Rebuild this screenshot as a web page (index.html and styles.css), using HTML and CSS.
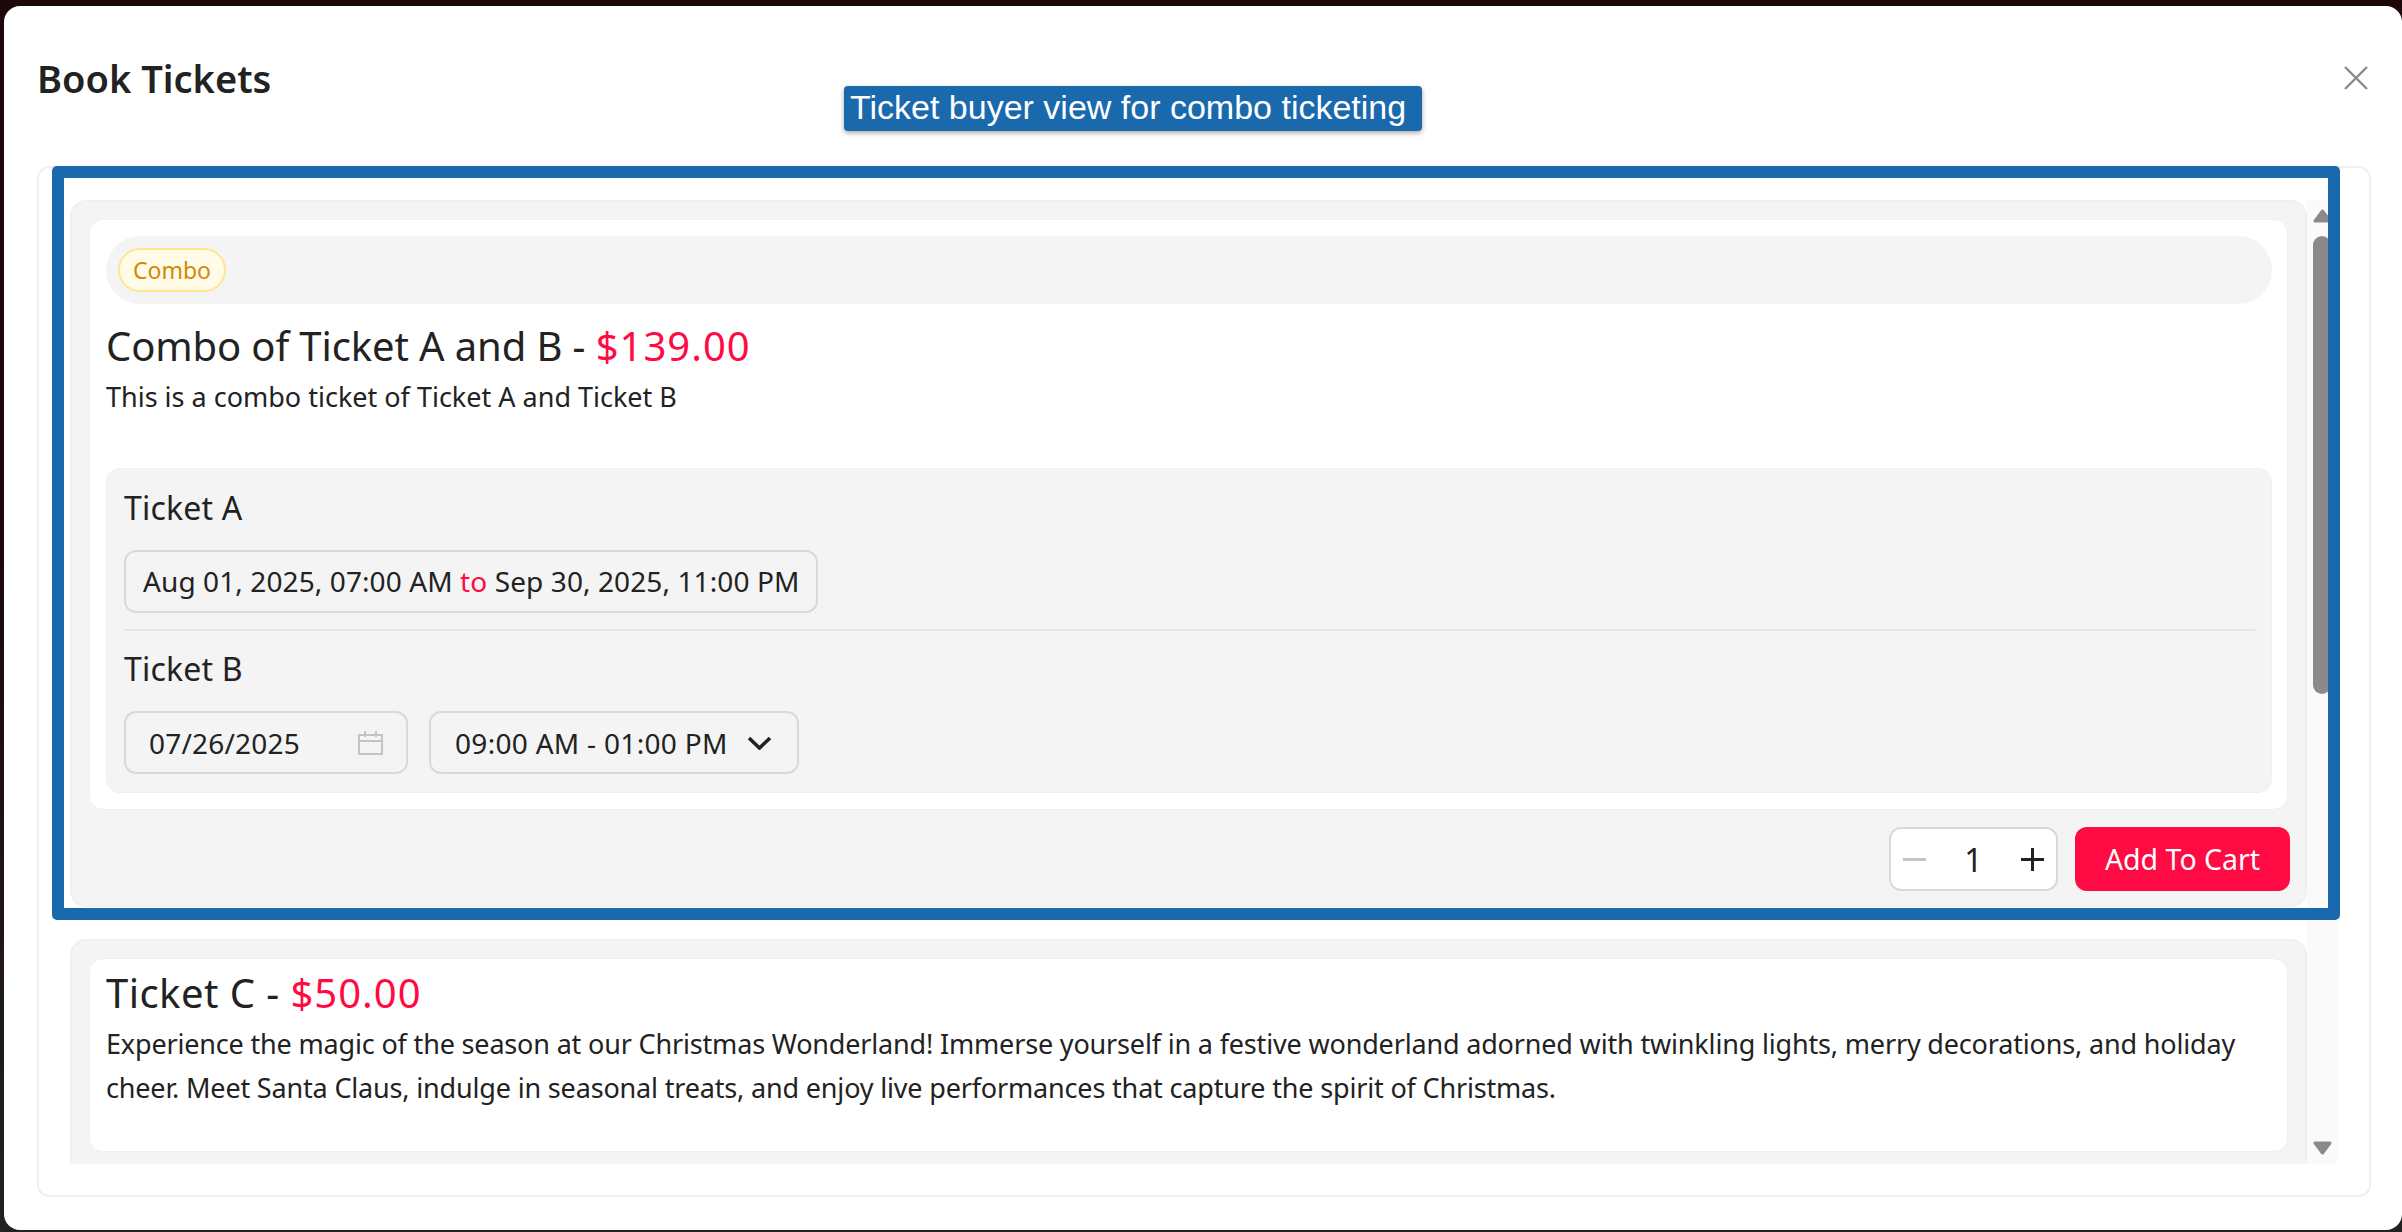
FILE: index.html
```html
<!DOCTYPE html>
<html lang="en">
<head>
  <meta charset="UTF-8">
  <meta name="viewport" content="width=device-width, initial-scale=1.0">
  <title>Book Tickets</title>
  <link rel="stylesheet" href="styles.css">
</head>
<body>
  <div class="modal">
    <div class="modal-header">
      <h2 class="modal-title">Book Tickets</h2>
      <svg class="close-icon" width="24" height="24" viewBox="0 0 24 24">
        <path d="M1 1L23 23M23 1L1 23"/>
      </svg>
    </div>

    <div class="panel">
      <div class="scroll-area">
        <div class="ticket-list">

          <div class="ticket">
            <div class="ticket-body">
              <div class="tag-row"><span class="tag">Combo</span></div>
              <div class="ticket-name">Combo of Ticket A and B - <span class="price">$139.00</span></div>
              <p class="ticket-desc">This is a combo ticket of Ticket A and Ticket B</p>

              <div class="combo-items">
                <div class="combo-name">Ticket A</div>
                <div class="field-row">
                  <div class="field field-range">Aug 01, 2025, 07:00 AM <span class="to">to</span> Sep 30, 2025, 11:00 PM</div>
                </div>
                <div class="combo-divider"></div>
                <div class="combo-name">Ticket B</div>
                <div class="field-row">
                  <div class="field field-date">
                    <span>07/26/2025</span>
                    <svg class="calendar-icon" width="25" height="24" viewBox="0 0 25 24">
                      <path d="M1 4H24V23H1ZM1 10H24M7 0V6M18 0V6"/>
                    </svg>
                  </div>
                  <div class="field field-select">
                    <span>09:00 AM - 01:00 PM</span>
                    <svg class="chevron-icon" width="25" height="14" viewBox="0 0 25 14">
                      <path d="M2 2L12.5 12L23 2"/>
                    </svg>
                  </div>
                </div>
              </div>
            </div>

            <div class="ticket-footer">
              <div class="stepper">
                <span class="step-minus"></span>
                <span class="step-value">1</span>
                <span class="step-plus"></span>
              </div>
              <button class="add-btn">Add To Cart</button>
            </div>
          </div>

          <div class="ticket ticket-cut">
            <div class="ticket-body ticket-body-plain">
              <div class="ticket-name">Ticket C - <span class="price">$50.00</span></div>
              <p class="ticket-desc ticket-desc-long">Experience the magic of the season at our Christmas Wonderland! Immerse yourself in a festive wonderland adorned with twinkling lights, merry decorations, and holiday cheer. Meet Santa Claus, indulge in seasonal treats, and enjoy live performances that capture the spirit of Christmas.</p>
            </div>
          </div>

        </div>

        <div class="scrollbar">
          <svg class="arrow" width="19" height="14" viewBox="0 0 19 14"><path d="M9.5 2L17 12H2Z"/></svg>
          <span class="thumb"></span>
          <svg class="arrow arrow-down" width="19" height="14" viewBox="0 0 19 14"><path d="M2 2H17L9.5 12Z"/></svg>
        </div>
      </div>
    </div>

    <!-- annotation drawn on top of the screenshot -->
    <div class="note-label">Ticket buyer view for combo ticketing</div>
    <div class="note-frame"></div>
  </div>
</body>
</html>
```

FILE: styles.css
```css
* {
  box-sizing: border-box;
}
html, body {
  height: 100%;
}
body {
  margin: 0;
  padding: 6px 0 2px 4px;
  overflow: hidden;
  font-family: "Noto Sans", Lato, sans-serif;
  color: #222;
  background: linear-gradient(180deg, #1c0709 0%, #1c0709 45%, #222 100%);
}
.modal {
  position: relative;
  height: 1224px;
  background: white;
  border-radius: 16px;
  overflow: hidden;
}
.modal-header {
  display: flex;
  justify-content: space-between;
  align-items: center;
  height: 160px;
  padding: 0 34px 16px 33px;
}
.modal-title {
  margin: 0;
  font-size: 38px;
  line-height: 50px;
  font-weight: 600;
}
.close-icon path {
  fill: none;
  stroke: #8a8a8a;
  stroke-width: 2.4;
}
.panel {
  width: 2334px;
  height: 1031px;
  margin-left: 33px;
  padding: 32px 32px 31px 31px;
  border: 2px solid #f0f0f0;
  border-radius: 12px;
}
.scroll-area {
  display: flex;
  height: 964px;
  overflow: hidden;
}
.ticket-list {
  flex: 1;
  display: flex;
  flex-direction: column;
  gap: 32px;
}
.ticket {
  padding: 17px 17px 14px;
  background: #f4f4f4;
  border: 2px solid #f0f0f0;
  border-radius: 16px;
}
.ticket-cut {
  padding-bottom: 60px;
}
.ticket-body {
  padding: 16px 15px 16px 16px;
  background: white;
  border: 1px solid #f0f0f0;
  border-radius: 14px;
}
.ticket-body-plain {
  padding: 9px 15px 41px 16px;
}
.tag-row {
  display: flex;
  align-items: center;
  height: 68px;
  padding-left: 12px;
  background: #f4f4f4;
  border-radius: 34px;
}
.tag {
  padding: 0 13px;
  font-size: 23px;
  line-height: 40px;
  color: #d48806;
  background: #fffbe6;
  border: 2px solid #ffe58f;
  border-radius: 22px;
}
.ticket-name {
  margin-top: 17px;
  font-size: 40px;
  line-height: 50px;
  letter-spacing: -0.12px;
}
.ticket-body-plain .ticket-name {
  margin-top: 0;
  letter-spacing: 0.45px;
}
.ticket-name .price {
  letter-spacing: 1px;
}
.price, .to {
  color: #ff0a43;
}
.ticket-desc {
  margin: 4px 0 0;
  font-size: 27px;
  line-height: 44px;
}
.ticket-desc-long {
  letter-spacing: -0.17px;
}
.combo-items {
  margin-top: 49px;
  padding: 19px 16px 18px 17px;
  background: #f4f4f4;
  border: 1px solid #f0f0f0;
  border-radius: 14px;
}
.combo-name {
  font-size: 32px;
  line-height: 40px;
  letter-spacing: 0.2px;
}
.field-row {
  display: flex;
  gap: 21px;
  margin-top: 22px;
}
.field {
  display: flex;
  align-items: center;
  height: 63px;
  font-size: 28px;
  letter-spacing: 0.2px;
  border: 2px solid #d9d9d9;
  border-radius: 12px;
}
.field-range {
  display: block;
  width: 694px;
  padding: 0 17px;
  line-height: 59px;
  letter-spacing: 0.1px;
  white-space: pre;
}
.field-date {
  justify-content: space-between;
  width: 284px;
  padding: 0 23px;
}
.field-select {
  justify-content: space-between;
  width: 370px;
  padding: 0 25px 0 24px;
  letter-spacing: 0.3px;
}
.calendar-icon path {
  fill: none;
  stroke: #c4c4c4;
  stroke-width: 2;
}
.chevron-icon path {
  fill: none;
  stroke: #222;
  stroke-width: 3.6;
}
.combo-divider {
  height: 2px;
  margin-top: 16px;
  margin-bottom: 18px;
  background: #e6e6e6;
}
.ticket-footer {
  display: flex;
  justify-content: flex-end;
  gap: 17px;
  margin: 17px -2px 0 0;
}
.stepper {
  display: flex;
  align-items: center;
  justify-content: space-between;
  width: 169px;
  height: 64px;
  padding: 0 12px;
  background: white;
  border: 2px solid #d9d9d9;
  border-radius: 12px;
}
.step-value {
  font-size: 32px;
}
.step-minus, .step-plus {
  position: relative;
  width: 23px;
  height: 3px;
  background: #c4c4c4;
}
.step-plus {
  background: #222;
}
.step-plus::after {
  content: "";
  position: absolute;
  left: 10px;
  top: -10px;
  width: 3px;
  height: 23px;
  background: #222;
}
.add-btn {
  width: 215px;
  height: 64px;
  padding: 0;
  font-family: inherit;
  font-size: 28.5px;
  color: white;
  background: #ff0a43;
  border: none;
  border-radius: 12px;
}
.scrollbar {
  display: flex;
  flex-direction: column;
  align-items: center;
  width: 30px;
  padding: 9px 0;
  background: #fafafa;
}
.arrow path {
  fill: #8a8a8a;
  stroke: #8a8a8a;
  stroke-width: 3;
  stroke-linejoin: round;
}
.arrow-down {
  margin-top: auto;
}
.thumb {
  width: 18px;
  height: 458px;
  margin-top: 13px;
  background: #8a8a8a;
  border-radius: 9px;
}
.note-label {
  position: absolute;
  left: 840px;
  top: 80px;
  width: 578px;
  height: 45px;
  padding-left: 6px;
  font-family: "Liberation Sans", Arial, sans-serif;
  font-size: 34px;
  line-height: 43px;
  color: white;
  background: #1a69ad;
  border-radius: 4px;
  box-shadow: 0 2px 5px rgba(0,0,0,0.35);
}
.note-frame {
  position: absolute;
  left: 48px;
  top: 160px;
  width: 2288px;
  height: 754px;
  border: solid #1a69ad;
  border-width: 12px;
  border-radius: 5px;
}
```
